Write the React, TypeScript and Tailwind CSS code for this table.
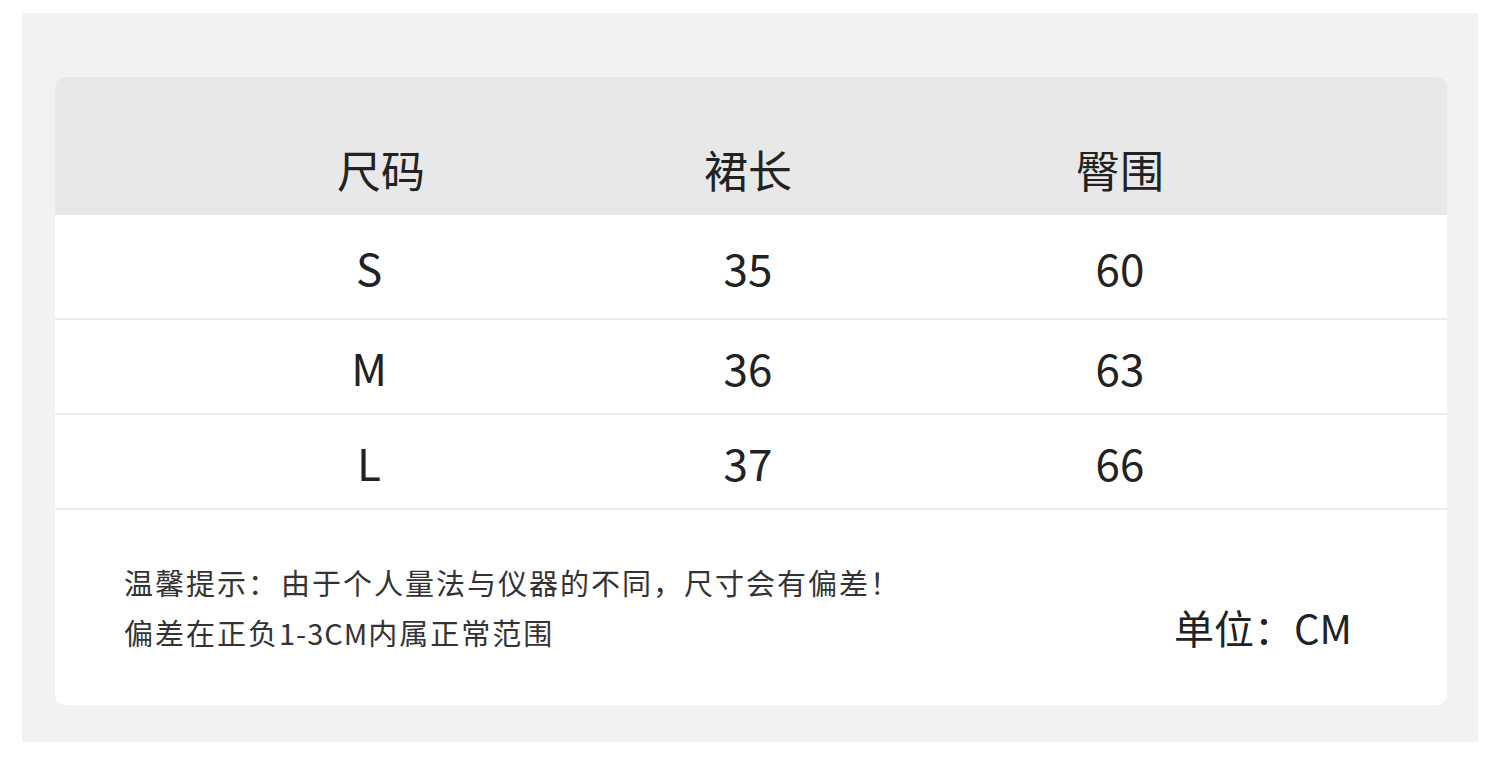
import React from "react";

const rows = [
  { size: "S", len: "35", hip: "60", h: "h-[105px]" },
  { size: "M", len: "36", hip: "63", h: "h-[95px]" },
  { size: "L", len: "37", hip: "66", h: "h-[95px]" },
];

export default function App() {
  return (
    <div
      className="w-[1500px] h-[777px] bg-white pt-[13px] pl-[22px]"
      style={{ fontFamily: '"Noto Sans CJK SC", "Noto Sans", sans-serif' }}
    >
      <div className="w-[1456px] h-[729px] bg-[#f2f2f2] pl-[33px] pt-[64px]">
        <div className="w-[1392px] h-[628px] bg-white rounded-[10px] overflow-hidden flex flex-col">
          <div className="h-[138px] bg-[#e8e8e8] pt-[46px] pl-[135px] grid grid-cols-[372px_372px_372px] items-center text-[44px] leading-none text-[#222]">
            <div className="text-center pl-[10px]">尺码</div>
            <div className="text-center">裙长</div>
            <div className="text-center">臀围</div>
          </div>
          {rows.map((r) => (
            <div
              key={r.size}
              className={`${r.h} border-b-2 border-[#ececec] pl-[135px] grid grid-cols-[372px_372px_372px] items-center text-[44px] leading-none text-[#222]`}
            >
              <div className="text-center pr-[14px]">{r.size}</div>
              <div className="text-center">{r.len}</div>
              <div className="text-center">{r.hip}</div>
            </div>
          ))}
          <div className="flex-1 flex items-start justify-between pl-[69px] pr-[95px] pt-[47px] text-[#333]">
            <div className="text-[29px] leading-[50px] tracking-[2px]">
              <div>
                温馨提示：<span className="ml-[2px]">由于个人量法与仪器的不同，尺寸会有偏差！</span>
              </div>
              <div>
                偏差在正负<span className="tracking-[1px]">1-3CM</span>内属正常范围
              </div>
            </div>
            <div className="text-[40px] leading-[50px] mt-[45px] text-[#222]">单位：CM</div>
          </div>
        </div>
      </div>
    </div>
  );
}
